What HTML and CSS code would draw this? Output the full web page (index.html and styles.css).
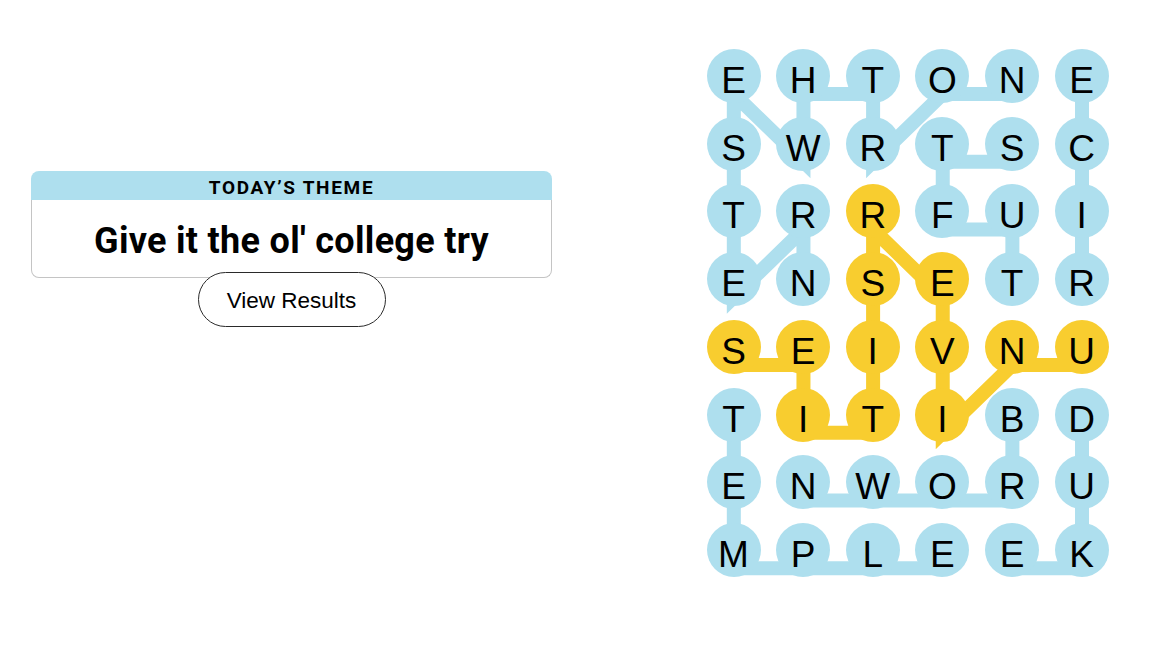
FILE: index.html
```html
<!DOCTYPE html>
<html lang="en">
<head>
<meta charset="utf-8">
<title>Strands</title>
<link rel="stylesheet" href="styles.css">
</head>
<body>
<main class="page">
  <section class="left">
    <div class="theme-card">
      <div class="theme-head">TODAY’S THEME</div>
      <div class="theme-body"><h1 class="theme-title">Give it the ol' college try</h1></div>
    </div>
    <button class="results-btn" type="button">View Results</button>
  </section>
  <section class="board-wrap">
    <div class="board">
      <svg class="links" width="418" height="542" viewBox="0 0 418 542" aria-hidden="true">
        <g fill="none" stroke-width="14" stroke-linejoin="miter" stroke-miterlimit="4">
          <polyline class="ln-blue" points="313.38,51.88 243.74,51.88 174.1,119.64 174.1,51.88 104.46,51.88 104.46,119.64 34.82,51.88 34.82,119.64 34.82,187.4 34.82,255.16 104.46,187.4 104.46,255.16"/>
          <polyline class="ln-blue" points="383.02,255.16 383.02,187.4 383.02,119.64 383.02,51.88"/>
          <polyline class="ln-blue" points="313.38,255.16 313.38,187.4 243.74,187.4 243.74,119.64 313.38,119.64"/>
          <polyline class="ln-blue" points="383.02,390.68 383.02,458.44 383.02,526.2 313.38,526.2"/>
          <polyline class="ln-blue" points="313.38,390.68 313.38,458.44 243.74,458.44 174.1,458.44 104.46,458.44"/>
          <polyline class="ln-blue" points="34.82,390.68 34.82,458.44 34.82,526.2 104.46,526.2 174.1,526.2 243.74,526.2"/>
          <polyline class="ln-gold" points="383.02,322.92 313.38,322.92 243.74,390.68 243.74,322.92 243.74,255.16 174.1,187.4 174.1,255.16 174.1,322.92 174.1,390.68 104.46,390.68 104.46,322.92 34.82,322.92"/>
        </g>
      </svg>
      <div class="cell"><span class="dot">E</span></div>
      <div class="cell"><span class="dot">H</span></div>
      <div class="cell"><span class="dot">T</span></div>
      <div class="cell"><span class="dot">O</span></div>
      <div class="cell"><span class="dot">N</span></div>
      <div class="cell"><span class="dot">E</span></div>

      <div class="cell"><span class="dot">S</span></div>
      <div class="cell"><span class="dot">W</span></div>
      <div class="cell"><span class="dot">R</span></div>
      <div class="cell"><span class="dot">T</span></div>
      <div class="cell"><span class="dot">S</span></div>
      <div class="cell"><span class="dot">C</span></div>

      <div class="cell"><span class="dot">T</span></div>
      <div class="cell"><span class="dot">R</span></div>
      <div class="cell"><span class="dot gold">R</span></div>
      <div class="cell"><span class="dot">F</span></div>
      <div class="cell"><span class="dot">U</span></div>
      <div class="cell"><span class="dot">I</span></div>

      <div class="cell"><span class="dot">E</span></div>
      <div class="cell"><span class="dot">N</span></div>
      <div class="cell"><span class="dot gold">S</span></div>
      <div class="cell"><span class="dot gold">E</span></div>
      <div class="cell"><span class="dot">T</span></div>
      <div class="cell"><span class="dot">R</span></div>

      <div class="cell"><span class="dot gold">S</span></div>
      <div class="cell"><span class="dot gold">E</span></div>
      <div class="cell"><span class="dot gold">I</span></div>
      <div class="cell"><span class="dot gold">V</span></div>
      <div class="cell"><span class="dot gold">N</span></div>
      <div class="cell"><span class="dot gold">U</span></div>

      <div class="cell"><span class="dot">T</span></div>
      <div class="cell"><span class="dot gold">I</span></div>
      <div class="cell"><span class="dot gold">T</span></div>
      <div class="cell"><span class="dot gold">I</span></div>
      <div class="cell"><span class="dot">B</span></div>
      <div class="cell"><span class="dot">D</span></div>

      <div class="cell"><span class="dot">E</span></div>
      <div class="cell"><span class="dot">N</span></div>
      <div class="cell"><span class="dot">W</span></div>
      <div class="cell"><span class="dot">O</span></div>
      <div class="cell"><span class="dot">R</span></div>
      <div class="cell"><span class="dot">U</span></div>

      <div class="cell"><span class="dot">M</span></div>
      <div class="cell"><span class="dot">P</span></div>
      <div class="cell"><span class="dot">L</span></div>
      <div class="cell"><span class="dot">E</span></div>
      <div class="cell"><span class="dot">E</span></div>
      <div class="cell"><span class="dot">K</span></div>
    </div>
  </section>
</main>
</body>
</html>
```

FILE: styles.css
```css
html, body {
  margin: 0;
  padding: 0;
  background: #ffffff;
}

body {
  font-family: "Liberation Sans", Arial, sans-serif;
  color: #000000;
}

.page {
  display: flex;
  align-items: flex-start;
  width: 1150px;
  height: 647px;
  overflow: hidden;
}

/* ---------- left column ---------- */
.left {
  width: 521px;
  margin-left: 31px;
  padding-top: 171px;
  display: flex;
  flex-direction: column;
  align-items: center;
}

.theme-card {
  width: 521px;
}

.theme-head {
  height: 29px;
  background: #aedfee;
  border-radius: 8px 8px 0 0;
  text-align: center;
  font-family: Roboto, "Liberation Sans", sans-serif;
  font-size: 19px;
  font-weight: 700;
  line-height: 33px;
  letter-spacing: 1.7px;
}

.theme-body {
  box-sizing: border-box;
  height: 78px;
  border: 1px solid #c4c4c4;
  border-top: none;
  border-radius: 0 0 8px 8px;
  display: flex;
  align-items: center;
  justify-content: center;
}

.theme-title {
  margin: 0;
  padding-top: 4px;
  font-family: Roboto, "Liberation Sans", sans-serif;
  font-size: 36px;
  font-weight: 700;
  line-height: 1;
  letter-spacing: 0.3px;
}

.results-btn {
  margin-top: -6px;
  width: 188px;
  height: 55px;
  border: 1px solid #2a2a2a;
  border-radius: 28px;
  background: #ffffff;
  color: #000000;
  font-family: "Liberation Sans", Arial, sans-serif;
  font-size: 22.5px;
  padding: 2px 0 0;
}

/* ---------- board ---------- */
.board-wrap {
  margin-left: 146.7px;
  padding-top: 42.1px;
}

.board {
  position: relative;
  display: grid;
  grid-template-columns: repeat(6, 69.64px);
  grid-template-rows: repeat(8, 67.76px);
}

.links {
  position: absolute;
  left: 0;
  top: 0;
  z-index: 0;
}

.ln-blue {
  stroke: #aedfee;
}

.ln-gold {
  stroke: #f8cd2f;
}

.cell {
  position: relative;
  z-index: 1;
  display: flex;
  align-items: center;
  justify-content: center;
}

.dot {
  width: 54px;
  height: 54px;
  border-radius: 50%;
  background: #aedfee;
  text-align: center;
  font-size: 37px;
  line-height: 64px;
  overflow: visible;
}

.dot.gold {
  background: #f8cd2f;
}
```
